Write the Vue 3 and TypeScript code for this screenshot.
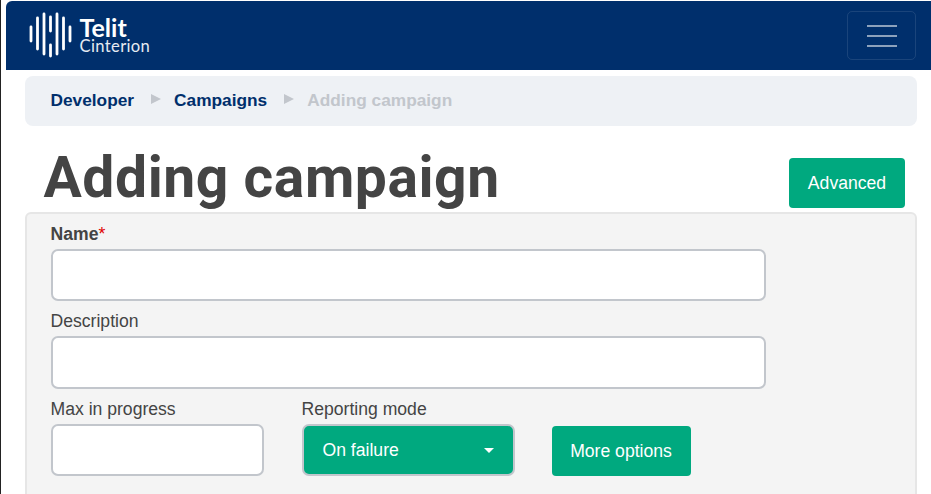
<script setup lang="ts">
const crumbs: { label: string; href: string }[] = [
  { label: 'Developer', href: '#' },
  { label: 'Campaigns', href: '#' },
]
const bars: { x: number; y1: number; y2: number }[] = [
  { x: 31, y1: 27, y2: 41 },
  { x: 37.5, y1: 18, y2: 49 },
  { x: 44, y1: 14, y2: 54 },
  { x: 50.5, y1: 17, y2: 31 },
  { x: 50.5, y1: 45, y2: 56 },
  { x: 57, y1: 14, y2: 54 },
  { x: 63.5, y1: 18, y2: 49 },
  { x: 70, y1: 27, y2: 41 },
]
</script>

<template>
  <div class="page">
    <header class="navbar">
      <div class="brand">
        <svg class="mark" width="46" height="70" viewBox="28 0 46 70" aria-hidden="true">
          <line
            v-for="(b, i) in bars"
            :key="i"
            :x1="b.x"
            :x2="b.x"
            :y1="b.y1"
            :y2="b.y2"
            stroke="#fff"
            stroke-width="2.8"
            stroke-linecap="round"
          />
        </svg>
        <div class="wordmark">
          <span class="telit">Telit</span>
          <span class="cinterion">Cinterion</span>
        </div>
      </div>
      <button class="toggler" type="button" aria-label="Toggle navigation">
        <span></span><span></span><span></span>
      </button>
    </header>

    <main class="content">
      <nav class="breadcrumb">
        <template v-for="c in crumbs" :key="c.label">
          <a class="crumb" :href="c.href">{{ c.label }}</a>
          <i class="sep"></i>
        </template>
        <span class="crumb current">Adding campaign</span>
      </nav>

      <div class="title-row">
        <h1>Adding campaign</h1>
        <button class="btn advanced" type="button">Advanced</button>
      </div>

      <form class="panel" @submit.prevent>
        <label class="field wide">
          <span class="label strong">Name<em>*</em></span>
          <input type="text" />
        </label>
        <label class="field wide">
          <span class="label">Description</span>
          <input class="tall" type="text" />
        </label>
        <div class="row">
          <label class="field small">
            <span class="label">Max in progress</span>
            <input type="text" />
          </label>
          <div class="field small">
            <span class="label">Reporting mode</span>
            <div class="select">
              <span>On failure</span>
              <i class="caret"></i>
            </div>
          </div>
          <button class="btn more" type="button">More options</button>
        </div>
      </form>
    </main>
  </div>
</template>

<style scoped>
.page {
  box-sizing: border-box;
  width: 931px;
  height: 494px;
  overflow: hidden;
  padding: 1px 0 0 6px;
  font-family: "Liberation Sans", Arial, sans-serif;
  font-size: 17.6px;
  color: #444;
  background: #fff;
  border-left: 1.5px solid #222;
}
.navbar {
  height: 69px;
  margin-left: -1.5px;
  background: #002f6c;
  border-top-left-radius: 6px;
  display: flex;
  align-items: center;
  justify-content: space-between;
  padding-right: 15px;
}
.brand {
  display: flex;
  align-items: center;
  margin-left: 22px;
  margin-top: -1px;
}
.mark {
  display: block;
}
.wordmark {
  display: flex;
  flex-direction: column;
  margin-left: 6px;
  color: #fff;
  font-family: Lato, sans-serif;
}
.telit {
  font-size: 25px;
  font-weight: 700;
  line-height: 23px;
}
.cinterion {
  font-size: 16.6px;
  font-weight: 400;
  line-height: 15px;
  letter-spacing: 0.35px;
  color: #e6ebf2;
}
.toggler {
  box-sizing: border-box;
  width: 69px;
  height: 49px;
  background: transparent;
  border: 1px solid rgba(255, 255, 255, 0.1);
  border-radius: 5px;
  display: flex;
  flex-direction: column;
  align-items: center;
  justify-content: center;
  gap: 8px;
  padding: 0;
}
.toggler span {
  display: block;
  width: 30px;
  height: 2px;
  background: rgba(255, 255, 255, 0.55);
}
.content {
  padding: 6px 14px 0 17.5px;
}
.breadcrumb {
  height: 50px;
  box-sizing: border-box;
  padding-left: 26px;
  background: #eef1f5;
  border-radius: 8px;
  display: flex;
  align-items: center;
}
.crumb {
  margin-top: -2px;
  font-weight: 700;
  font-size: 17.3px;
  color: #002f6c;
  text-decoration: none;
}
.crumb.current {
  color: #c2c6cc;
}
.sep {
  width: 0;
  height: 0;
  margin: -4px 13px 0 17px;
  border-style: solid;
  border-width: 5.5px 0 5.5px 10px;
  border-color: transparent transparent transparent #c2c6cc;
}
.title-row {
  height: 86px;
  display: flex;
  align-items: flex-start;
  justify-content: space-between;
  padding: 0 12px 0 19px;
}
h1 {
  margin: 14px 0 0;
  font-family: Roboto, sans-serif;
  font-weight: 700;
  font-size: 57px;
  line-height: 76px;
  letter-spacing: 0.55px;
  color: #444;
  white-space: nowrap;
}
.btn {
  box-sizing: border-box;
  height: 50px;
  border: none;
  border-radius: 4px;
  background: #00a97f;
  color: #fff;
  font: 17.6px "Liberation Sans", Arial, sans-serif;
  padding: 0;
}
.advanced {
  width: 116px;
  margin-top: 32px;
}
.panel {
  box-sizing: border-box;
  height: 290px;
  padding: 10px 24px;
  background: #f4f4f4;
  border: 2px solid #e6e6e6;
  border-radius: 6px;
  display: flex;
  flex-direction: column;
  gap: 10px;
}
.field {
  display: flex;
  flex-direction: column;
  gap: 5px;
}
.label {
  line-height: 20px;
  color: #444;
}
.label.strong {
  font-weight: 700;
}
.label em {
  font-style: normal;
  font-weight: 400;
  color: #e00000;
}
input {
  box-sizing: border-box;
  height: 52px;
  background: #fff;
  border: 2px solid #c2c6cc;
  border-radius: 7px;
  outline: none;
  padding: 0 12px;
  font: 16px "Liberation Sans", Arial, sans-serif;
}
input.tall {
  height: 53px;
}
.wide {
  width: 715px;
}
.row {
  display: flex;
  align-items: flex-end;
}
.small {
  width: 213px;
}
.small + .small {
  margin-left: 38px;
}
.select {
  box-sizing: border-box;
  height: 52px;
  padding: 0 19px 0 19px;
  background: #00a97f;
  border: 2px solid #c2c6cc;
  border-radius: 7px;
  color: #fff;
  display: flex;
  align-items: center;
  justify-content: space-between;
}
.caret {
  width: 0;
  height: 0;
  border-style: solid;
  border-width: 5px 5px 0;
  border-color: #fff transparent transparent;
}
.more {
  width: 139px;
  margin-left: 37px;
}
</style>
